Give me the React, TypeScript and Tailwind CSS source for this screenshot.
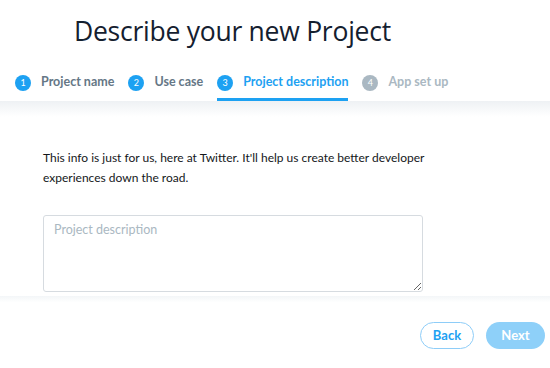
import React from "react";

const steps = [
  { n: 1, label: "Project name", state: "done" },
  { n: 2, label: "Use case", state: "done" },
  { n: 3, label: "Project description", state: "active" },
  { n: 4, label: "App set up", state: "todo" },
];

export default function App() {
  return (
    <div
      className="w-[550px] h-[368px] bg-white overflow-hidden flex flex-col"
      style={{ fontFamily: '"Open Sans", "Noto Sans", sans-serif' }}
    >
      {/* Header */}
      <div className="pl-[74px] pt-[13px] h-[63px]">
        <h1 className="text-[26.5px] leading-[36px] text-[#14202f] tracking-[-0.25px]">
          Describe your new Project
        </h1>
      </div>

      {/* Steps */}
      <div className="flex items-stretch h-[38px] pl-[15px] gap-[14px] relative z-10 font-['Lato',sans-serif]">
        {steps.map((s) => (
          <div
            key={s.n}
            className={
              "flex items-center gap-[10px] pt-[4px] border-b-[3px] " +
              (s.state === "active" ? "border-[#1da1f2]" : "border-transparent")
            }
          >
            <span
              className={
                "w-4 h-4 rounded-full flex items-center justify-center text-[9px] text-white " +
                (s.state === "todo" ? "bg-[#aab8c2]" : "bg-[#1da1f2]")
              }
            >
              {s.n}
            </span>
            <span
              className={
                "text-[12.5px] font-bold " +
                (s.state === "active"
                  ? "text-[#1da1f2]"
                  : s.state === "done"
                  ? "text-[#657786]"
                  : "text-[#aab8c2]")
              }
            >
              {s.label}
            </span>
          </div>
        ))}
      </div>

      {/* Body */}
      <div className="flex-1 bg-gradient-to-b from-[#eef1f4] via-white via-[8%] to-white pl-[43px] pt-[47px] font-['Lato',sans-serif]">
        <p className="text-[12px] leading-[20px] text-[#14171a] w-[400px]">
          This info is just for us, here at Twitter. It'll help us create better developer experiences down the road.
        </p>
        <textarea
          placeholder="Project description"
          className="mt-[27px] block w-[380px] h-[77px] border border-[#d6dbe0] rounded-[3px] px-[10px] py-[5px] text-[12.5px] text-[#14171a] placeholder-[#aab8c2] outline-none resize-y"
        />
      </div>

      {/* Footer */}
      <div className="h-[72px] bg-gradient-to-b from-[#f3f6f8] via-white via-[9%] to-white flex justify-end items-start pt-[26px] pr-[5px] gap-[12px] font-['Lato',sans-serif]">
        <button className="w-[54px] h-[27px] rounded-full border border-[#8ecdf8] text-[#1da1f2] text-[13px] font-bold">
          Back
        </button>
        <button className="w-[59px] h-[27px] rounded-full bg-[#8ed0f9] text-white text-[13px] font-bold">
          Next
        </button>
      </div>
    </div>
  );
}
